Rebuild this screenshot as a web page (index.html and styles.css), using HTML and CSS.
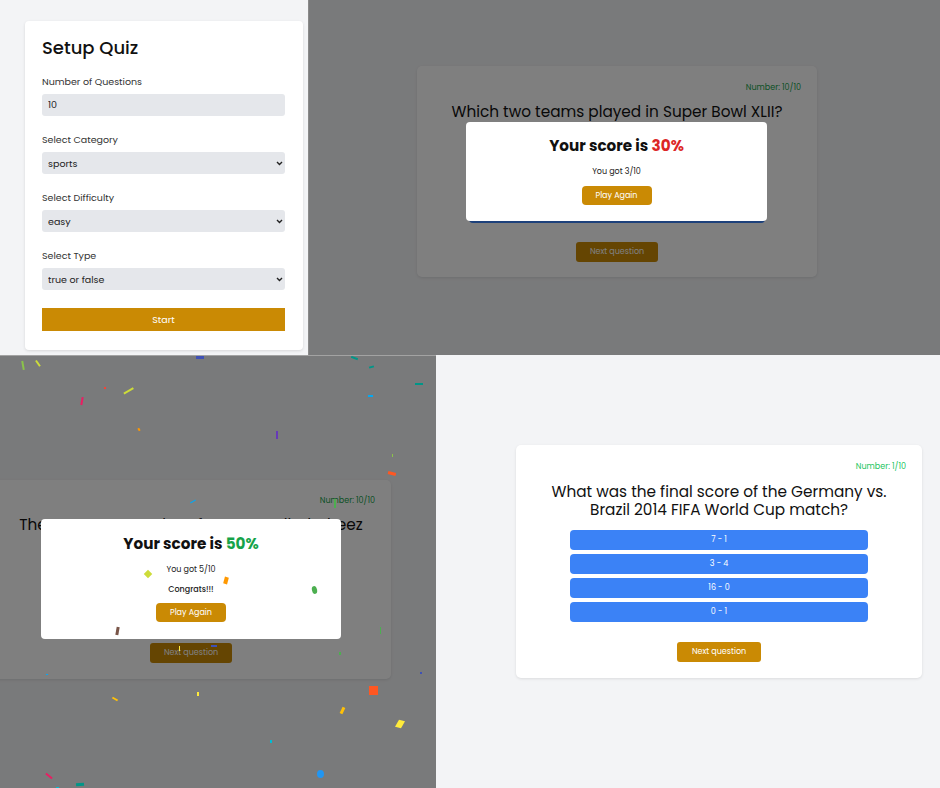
FILE: index.html
```html
<!DOCTYPE html>
<html lang="en">
<head>
<meta charset="utf-8">
<title>Quiz App</title>
<link rel="stylesheet" href="styles.css">
</head>
<body>
<div class="collage">
  <div class="row row-top">
    <section class="panel panel-setup">
      <form class="setup-card">
        <h1 class="setup-title">Setup Quiz</h1>
        <div class="field">
          <label class="field-label">Number of Questions</label>
          <input class="field-input" type="text" value="10">
        </div>
        <div class="field">
          <label class="field-label">Select Category</label>
          <div class="select-wrap">
            <select class="field-input field-select"><option>sports</option></select>
            <svg class="chev" width="7" height="5" viewBox="0 0 7 5"><path d="M1 1l2.5 2.5L6 1" fill="none" stroke="#222" stroke-width="1.4"/></svg>
          </div>
        </div>
        <div class="field">
          <label class="field-label">Select Difficulty</label>
          <div class="select-wrap">
            <select class="field-input field-select"><option>easy</option></select>
            <svg class="chev" width="7" height="5" viewBox="0 0 7 5"><path d="M1 1l2.5 2.5L6 1" fill="none" stroke="#222" stroke-width="1.4"/></svg>
          </div>
        </div>
        <div class="field">
          <label class="field-label">Select Type</label>
          <div class="select-wrap">
            <select class="field-input field-select"><option>true or false</option></select>
            <svg class="chev" width="7" height="5" viewBox="0 0 7 5"><path d="M1 1l2.5 2.5L6 1" fill="none" stroke="#222" stroke-width="1.4"/></svg>
          </div>
        </div>
        <button class="start-btn" type="button">Start</button>
      </form>
    </section>

    <section class="panel panel-result1">
      <div class="quiz-card card-r1">
        <p class="qnum qnum-dim">Number: 10/10</p>
        <h2 class="question q-r1">Which two teams played in Super Bowl XLII?</h2>
        <div class="answers ans-r1">
          <button class="answer">New York Giants &amp; New England Patriots</button>
          <button class="answer">Green Bay Packers &amp; Pittsburgh Steelers</button>
          <button class="answer">Philadelphia Eagles &amp; New England Patriots</button>
          <button class="answer">Seattle Seahawks &amp; Denver Broncos</button>
        </div>
        <button class="next-btn next-r1">Next question</button>
      </div>
      <div class="overlay"></div>
      <div class="modal modal-r1">
        <h3 class="score">Your score is <span class="pct-bad">30%</span></h3>
        <p class="got">You got 3/10</p>
        <button class="again-btn again-r1">Play Again</button>
      </div>
    </section>
  </div>

  <div class="row row-bottom">
    <section class="panel panel-result2">
      <div class="quiz-card card-r2">
        <p class="qnum qnum-dim">Number: 10/10</p>
        <h2 class="question q-r2">The Green Bay Packers fans are called Cheez<br>heads because of the state's<br>famous dairy farms.</h2>
        <div class="answers ans-r2">
          <button class="answer">True</button>
          <button class="answer">False</button>
        </div>
        <button class="next-btn next-r2">Next question</button>
      </div>
      <div class="overlay"></div>
      <div class="modal modal-r2">
        <h3 class="score">Your score is <span class="pct-good">50%</span></h3>
        <p class="got">You got 5/10</p>
        <p class="congrats">Congrats!!!</p>
        <button class="again-btn again-r2">Play Again</button>
      </div>
      <div class="confetti">
        <i style="left:22px;top:5px;width:1.5px;height:9px;background:#8bc34a;transform:rotate(-10deg)"></i>
        <i style="left:37px;top:4px;width:1.5px;height:7px;background:#cddc39;transform:rotate(-35deg)"></i>
        <i style="left:196px;top:0px;width:8px;height:3px;background:#3f51b5"></i>
        <i style="left:351px;top:1px;width:7px;height:2px;background:#009688;transform:rotate(20deg)"></i>
        <i style="left:369px;top:10px;width:5px;height:2px;background:#009688;transform:rotate(-15deg)"></i>
        <i style="left:415px;top:27px;width:8px;height:2px;background:#009688"></i>
        <i style="left:368px;top:39px;width:5px;height:2px;background:#03a9f4"></i>
        <i style="left:104px;top:31px;width:2px;height:2px;background:#f44336"></i>
        <i style="left:123px;top:34px;width:11px;height:1.5px;background:#cddc39;transform:rotate(-30deg)"></i>
        <i style="left:81px;top:41px;width:1.5px;height:8px;background:#e91e63;transform:rotate(10deg)"></i>
        <i style="left:138px;top:72px;width:2px;height:3px;background:#ff9800;transform:rotate(-30deg)"></i>
        <i style="left:276px;top:75px;width:2px;height:8px;background:#673ab7"></i>
        <i style="left:392px;top:98px;width:1px;height:3px;background:#8bc34a"></i>
        <i style="left:388px;top:116px;width:8px;height:2.5px;background:#ff5722;transform:rotate(15deg)"></i>
        <i style="left:190px;top:145px;width:6px;height:1px;background:#03a9f4;transform:rotate(-30deg)"></i>
        <i style="left:334px;top:143px;width:1.5px;height:9px;background:#4caf50"></i>
        <i style="left:145px;top:215px;width:6px;height:6px;background:#cddc39;transform:rotate(45deg)"></i>
        <i style="left:224px;top:221px;width:4px;height:7px;background:#ff9800;transform:rotate(15deg)"></i>
        <i style="left:312px;top:230px;width:5px;height:8px;background:#4caf50;border-radius:50%;transform:rotate(-15deg)"></i>
        <i style="left:116px;top:271px;width:3px;height:8px;background:#795548;transform:rotate(10deg)"></i>
        <i style="left:179px;top:290px;width:1px;height:5px;background:#ffeb3b"></i>
        <i style="left:211px;top:289px;width:6px;height:1.5px;background:#3f51b5"></i>
        <i style="left:380px;top:271px;width:1px;height:7px;background:#4caf50"></i>
        <i style="left:339px;top:296px;width:2px;height:3px;background:#4caf50"></i>
        <i style="left:46px;top:318px;width:2px;height:1px;background:#03a9f4"></i>
        <i style="left:420px;top:316px;width:2px;height:2px;background:#3f51b5"></i>
        <i style="left:369px;top:330px;width:9px;height:9px;background:#ff5722"></i>
        <i style="left:112px;top:342px;width:6px;height:2px;background:#ffc107;transform:rotate(30deg)"></i>
        <i style="left:197px;top:336px;width:2px;height:4px;background:#ffeb3b"></i>
        <i style="left:341px;top:351px;width:3px;height:7px;background:#ffc107;transform:rotate(25deg)"></i>
        <i style="left:397px;top:364px;width:6px;height:8px;background:#ffeb3b;transform:rotate(30deg) skewY(-15deg)"></i>
        <i style="left:270px;top:384px;width:1.5px;height:3px;background:#00bcd4"></i>
        <i style="left:317px;top:414px;width:7px;height:8px;background:#2196f3;border-radius:50%"></i>
        <i style="left:45px;top:419px;width:8px;height:2px;background:#e91e63;transform:rotate(40deg)"></i>
        <i style="left:76px;top:427px;width:8px;height:2.5px;background:#009688;transform:rotate(-5deg)"></i>
        <i style="left:56px;top:431px;width:3px;height:1px;background:#00bcd4"></i>
      </div>
    </section>

    <section class="panel panel-question">
      <div class="quiz-card card-q">
        <p class="qnum qnum-live">Number: 1/10</p>
        <h2 class="question q-q">What was the final score of the Germany vs. Brazil 2014 FIFA World Cup match?</h2>
        <div class="answers ans-q">
          <button class="answer">7 - 1</button>
          <button class="answer">3 - 4</button>
          <button class="answer">16 - 0</button>
          <button class="answer">0 - 1</button>
        </div>
        <button class="next-btn next-q">Next question</button>
      </div>
    </section>
  </div>
</div>
</body>
</html>
```

FILE: styles.css
```css
* { box-sizing: border-box; }

html, body {
  margin: 0;
  padding: 0;
  background: #f3f4f6;
  font-family: "Poppins", "Open Sans", "Liberation Sans", sans-serif;
  color: #111;
}

.collage {
  width: 940px;
  height: 788px;
  display: flex;
  flex-direction: column;
  overflow: hidden;
}

.row { display: flex; }
.row-top { height: 355px; }
.row-bottom { height: 433px; }

.panel {
  position: relative;
  overflow: hidden;
  background: #f3f4f6;
}

/* ---------- Setup panel ---------- */
.panel-setup {
  width: 309px;
  padding: 21px 0 0 25px;
  border-right: 1px solid #8a8a8a;
}

.setup-card {
  width: 278px;
  height: 329px;
  background: #fff;
  border-radius: 4px;
  box-shadow: 0 1px 3px rgba(0, 0, 0, 0.12);
  padding: 16px 18px 0 17px;
  display: flex;
  flex-direction: column;
}

.setup-title {
  margin: 0 0 17px;
  font-size: 18px;
  line-height: 22px;
  font-weight: 500;
  color: #111;
}

.field {
  display: flex;
  flex-direction: column;
  gap: 6px;
  margin-bottom: 18px;
}

.field-label {
  font-size: 9.5px;
  line-height: 12px;
  color: #333;
}

.field-input {
  display: block;
  width: 243px;
  height: 22px;
  border: none;
  border-radius: 3px;
  background: #e5e7eb;
  padding: 0 6px;
  font-family: inherit;
  font-size: 9.5px;
  color: #222;
  outline: none;
}

.select-wrap {
  display: grid;
  align-items: center;
  width: 243px;
}

.select-wrap > * { grid-area: 1 / 1; }

.field-select {
  -webkit-appearance: none;
  appearance: none;
}

.chev {
  justify-self: end;
  margin-right: 2px;
}

.start-btn {
  width: 243px;
  height: 23px;
  border: none;
  background: #ca8a04;
  color: #fff;
  font-family: inherit;
  font-size: 9.5px;
  padding: 0;
}

/* ---------- Quiz card ---------- */
.quiz-card {
  background: #fff;
  border-radius: 5px;
  box-shadow: 0 1px 3px rgba(0, 0, 0, 0.1);
  display: flex;
  flex-direction: column;
  align-items: center;
  padding: 16px 16px 16px;
}

.qnum {
  align-self: stretch;
  margin: 0;
  text-align: right;
  font-size: 8px;
  line-height: 12px;
}
.qnum-dim { color: #16a34a; }
.qnum-live { color: #22c55e; }

.question {
  margin: 10px 0 0;
  font-size: 15.3px;
  line-height: 18px;
  font-weight: 400;
  text-align: center;
  color: #111;
}

.answers {
  display: flex;
  flex-direction: column;
  gap: 4px;
  margin-top: 11px;
  width: 298px;
}

.answer {
  height: 20px;
  border: none;
  border-radius: 4px;
  background: #3b82f6;
  color: #fff;
  font-family: inherit;
  font-size: 8px;
  padding: 0;
}

.next-btn {
  margin-top: 20px;
  width: 84px;
  height: 20px;
  border: none;
  border-radius: 3px;
  background: #ca8a04;
  color: #fff;
  font-family: inherit;
  font-size: 8px;
  padding: 0;
}

/* result 1 (top right) */
.panel-result1 {
  width: 631px;
  padding: 66px 0 0 108px;
}
.card-r1 { width: 400px; padding: 16px 16px 15px; }
.q-r1 { margin-top: 9px; }
.ans-r1 { margin-top: 10px; width: 296px; }
.next-r1 { margin-top: 19px; width: 82px; }

/* result 2 (bottom left) */
.panel-result2 {
  width: 436px;
  padding: 124px 0 0 0;
  border-top: 1px solid #a3a3a3;
}
.card-r2 { width: 400px; margin-left: -9px; padding: 15px 16px 16px; }
.q-r2 { margin-top: 9px; white-space: nowrap; }
.ans-r2 { margin-top: 10px; }
.next-r2 { margin-top: 19px; width: 82px; }

/* question panel (bottom right) */
.panel-question {
  width: 504px;
  padding: 90px 0 0 80px;
}
.card-q { width: 406px; }

/* ---------- Overlay + modal ---------- */
.overlay {
  position: absolute;
  inset: 0;
  background: rgba(0, 0, 0, 0.5);
}

.modal {
  position: absolute;
  background: #fff;
  border-radius: 4px;
  display: flex;
  flex-direction: column;
  align-items: center;
  padding: 15px 0 16px;
}

.modal-r1 { left: 157px; top: 122px; width: 301px; height: 99px; }
.modal-r2 { left: 41px; top: 163px; width: 300px; height: 120px; padding-top: 16px; }

.score {
  margin: 0;
  font-size: 15.2px;
  line-height: 18px;
  font-weight: 700;
  color: #111;
}
.pct-bad { color: #dc2626; }
.pct-good { color: #16a34a; }

.got {
  margin: 11px 0 0;
  font-size: 8px;
  line-height: 12px;
  color: #222;
}

.congrats {
  margin: 8px 0 0;
  font-size: 8px;
  line-height: 12px;
  font-weight: 500;
  color: #222;
}

.again-btn {
  width: 70px;
  height: 19px;
  border: none;
  border-radius: 4px;
  background: #ca8a04;
  color: #fff;
  font-family: inherit;
  font-size: 8px;
  padding: 0;
}
.again-r1 { margin-top: 8px; }
.again-r2 { margin-top: 7px; }

/* ---------- Confetti ---------- */
.confetti {
  position: absolute;
  inset: 0;
  pointer-events: none;
}
.confetti i {
  position: absolute;
  display: block;
}
```
